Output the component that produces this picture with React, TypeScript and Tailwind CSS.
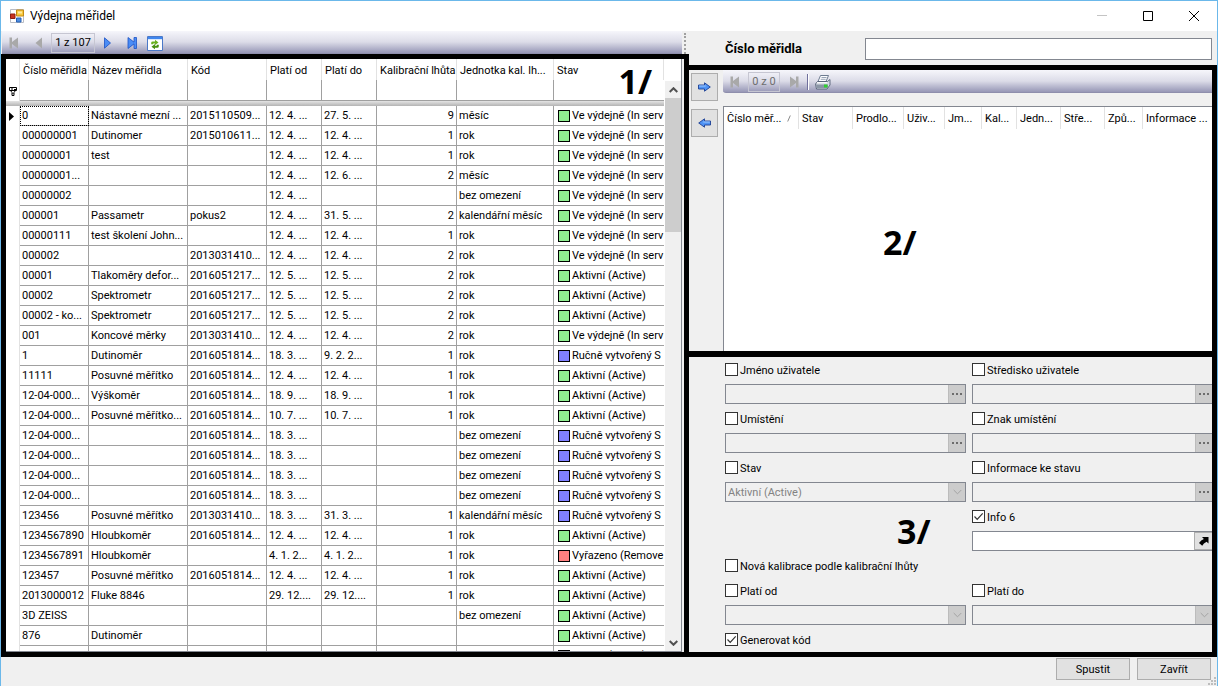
import type { ReactNode } from "react";

type State = "service" | "active" | "manual" | "removed";
type Row = [string, string, string, string, string, string, string, State];

const states: Record<State, { label: string; swatch: string }> = {
  service: { label: "Ve výdejně (In serv", swatch: "bg-[#90ee90]" },
  active: { label: "Aktivní (Active)", swatch: "bg-[#90ee90]" },
  manual: { label: "Ručně vytvořený S", swatch: "bg-[#8080ff]" },
  removed: { label: "Vyřazeno (Remove", swatch: "bg-[#ff8080]" },
};

const rows: Row[] = [
  ["0", "Nástavné mezní ...", "2015110509...", "12. 4. ...", "27. 5. ...", "9", "měsíc", "service"],
  ["000000001", "Dutinomer", "2015010611...", "12. 4. ...", "12. 4. ...", "1", "rok", "service"],
  ["00000001", "test", "", "12. 4. ...", "12. 4. ...", "1", "rok", "service"],
  ["00000001...", "", "", "12. 4. ...", "12. 6. ...", "2", "měsíc", "service"],
  ["00000002", "", "", "12. 4. ...", "", "", "bez omezení", "service"],
  ["000001", "Passametr", "pokus2", "12. 4. ...", "31. 5. ...", "2", "kalendářní měsíc", "service"],
  ["00000111", "test školení John...", "", "12. 4. ...", "12. 4. ...", "1", "rok", "service"],
  ["000002", "", "2013031410...", "12. 4. ...", "12. 4. ...", "2", "rok", "service"],
  ["00001", "Tlakoměry defor...", "2016051217...", "12. 5. ...", "12. 5. ...", "2", "rok", "active"],
  ["00002", "Spektrometr", "2016051217...", "12. 5. ...", "12. 5. ...", "2", "rok", "active"],
  ["00002 - ko...", "Spektrometr", "2016051217...", "12. 5. ...", "12. 5. ...", "2", "rok", "active"],
  ["001", "Koncové měrky", "2013031410...", "12. 4. ...", "12. 4. ...", "2", "rok", "service"],
  ["1", "Dutinoměr", "2016051814...", "18. 3. ...", "9. 2. 2...", "1", "rok", "manual"],
  ["11111", "Posuvné měřítko", "2016051814...", "12. 4. ...", "12. 4. ...", "1", "rok", "active"],
  ["12-04-000...", "Výškoměr", "2016051814...", "18. 9. ...", "18. 9. ...", "1", "rok", "active"],
  ["12-04-000...", "Posuvné měřítko...", "2016051814...", "10. 7. ...", "10. 7. ...", "1", "rok", "active"],
  ["12-04-000...", "", "2016051814...", "18. 3. ...", "", "", "bez omezení", "manual"],
  ["12-04-000...", "", "2016051814...", "18. 3. ...", "", "", "bez omezení", "manual"],
  ["12-04-000...", "", "2016051814...", "18. 3. ...", "", "", "bez omezení", "manual"],
  ["12-04-000...", "", "2016051814...", "18. 3. ...", "", "", "bez omezení", "manual"],
  ["123456", "Posuvné měřítko", "2013031410...", "18. 3. ...", "31. 3. ...", "1", "kalendářní měsíc", "manual"],
  ["1234567890", "Hloubkoměr", "2016051814...", "12. 4. ...", "12. 4. ...", "1", "rok", "active"],
  ["1234567891", "Hloubkoměr", "", "4. 1. 2...", "4. 1. 2...", "1", "rok", "removed"],
  ["123457", "Posuvné měřítko", "2016051814...", "12. 4. ...", "12. 4. ...", "1", "rok", "active"],
  ["2013000012", "Fluke 8846", "", "29. 12....", "29. 12....", "1", "rok", "active"],
  ["3D ZEISS", "", "", "", "", "", "bez omezení", "active"],
  ["876", "Dutinoměr", "", "", "", "", "", "active"],
  ["", "Posuvné měřítko", "", "", "", "", "", "active"],
];

const headers = ["Číslo měřidla", "Název měřidla", "Kód", "Platí od", "Platí do", "Kalibrační lhůta", "Jednotka kal. lh...", "Stav"];

const toolbar =
  "flex h-[23px] items-center border-b border-[#8e8eac] bg-linear-to-b from-[#f6f6fb] via-[#dcdce8] via-50% to-[#9797b6] pt-[2px]";

function FirstIcon({ off }: { off?: boolean }) {
  return (
    <svg width="10" height="12" viewBox="0 0 10 12" className={off ? "fill-[#a9a9a9]" : "fill-[#2f6fe0]"}>
      <path d="M0.5 0.5h2.5v4.6L9 0.5v11L3 6.9v4.6H0.5z" />
    </svg>
  );
}

function LastIcon({ off }: { off?: boolean }) {
  return (
    <svg
      width="10"
      height="12"
      viewBox="0 0 10 12"
      className={off ? "fill-[#a9a9a9]" : "fill-[#4a8cf5] stroke-[#1c52c4]"}
      strokeWidth="0.8"
    >
      <path d="M9.5 0.5H7v4.6L1 0.5v11l6-4.6v4.6h2.5z" />
    </svg>
  );
}

function FormIcon() {
  return (
    <svg width="14" height="14" viewBox="0 0 14 14">
      <path d="M0.5 0.5h13v13H0.5z" fill="#fff" stroke="#b9bcc4" />
      <path d="M6.5 1h7v6h-7z" fill="#f8c93c" stroke="#c48a12" />
      <path d="M8 2.5h4v2H8z" fill="#ffe9a0" />
      <path d="M0.5 5h4.500v4.500H0.5z" fill="#c8321f" stroke="#8f1c10" />
      <path d="M6.500 9h4.500v4H6.500z" fill="#4f8de0" stroke="#2660b4" />
    </svg>
  );
}

function RefreshIcon() {
  return (
    <svg width="16" height="15" viewBox="0 0 16 15">
      <path d="M0.5 0.5h15v14H0.5z" fill="#fff" stroke="#4a78c8" />
      <path d="M1 1h14v2.200H1z" fill="#3f86ee" />
      <path d="M4.200 8.300V6.800Q4.200 5.400 5.800 5.400H8V3.800l3.500 2.600L8 9V7.400H6.200v0.900z" fill="#6bb01e" />
      <path d="M11.800 8.700v1.500q0 1.500-1.600 1.500H8v1.600l-3.500-2.600L8 8.100v1.600h1.800V8.700z" fill="#4a9010" />
    </svg>
  );
}

function PrinterIcon() {
  return (
    <svg width="16" height="15" viewBox="0 0 16 15">
      <path d="M5.500 0.500h8l-2.500 6H3z" fill="#fdfdff" stroke="#6d7b90" />
      <path d="M6.500 2.500h5M5.700 4.300h5" stroke="#9aa6b8" />
      <path d="M2.500 6.500h10l2.500-2v5.500l-3 4H1.500L0.500 9z" fill="#d5dbe3" stroke="#47546a" strokeWidth="0.8" />
      <path d="M1 9.500h12v3.500H1.500z" fill="#8b96a6" />
      <path d="M9 9.500h3.500v3H9z" fill="#2fd02f" />
      <path d="M2 7.700h10" stroke="#fff" />
    </svg>
  );
}

function MoveArrow({ left }: { left?: boolean }) {
  return (
    <svg width="13" height="10" viewBox="0 0 13 10" className={left ? "-scale-x-100" : ""}>
      <path d="M0.500 3h6V0.800L12.300 5 6.500 9.200V7h-6z" fill="#4f93f5" stroke="#1d3f94" strokeWidth="0.9" />
      <path d="M1.200 4h6.500" stroke="#a9d2ff" strokeWidth="0.9" />
    </svg>
  );
}

function Chevron({ up, className }: { up?: boolean; className: string }) {
  return (
    <svg width="9" height="6" viewBox="0 0 9 6" fill="none" className={className}>
      <path d={up ? "M0.700 5L4.500 1.200 8.300 5" : "M0.700 1L4.500 4.800 8.300 1"} />
    </svg>
  );
}

function MeasuresTable() {
  return (
    <table className="w-full table-fixed border-separate border-spacing-0 text-left whitespace-nowrap">
      <colgroup>
        <col className="w-[14px]" />
        <col className="w-[69px]" />
        <col className="w-[99px]" />
        <col className="w-[79px]" />
        <col className="w-[55px]" />
        <col className="w-[55px]" />
        <col className="w-[80px]" />
        <col className="w-[97px]" />
        <col />
      </colgroup>
      <thead>
        <tr className="h-[21px]">
          <th className="border-r border-[#e2e2e2] p-0" />
          {headers.map((h) => (
            <th key={h} className="overflow-hidden border-r border-[#e2e2e2] p-0 pt-[2px] pl-[3px] font-normal">
              {h}
            </th>
          ))}
        </tr>
        <tr className="h-[21px]">
          <td className="border-r border-[#e2e2e2] p-0">
            <svg width="8" height="9" viewBox="0 0 8 9" className="mx-auto mt-[2px]" fill="none" stroke="#000">
              <path d="M0.500 0.500h7v3h-7zM1.500 3.500l1.500 2V8.500h2V5.500l1.500-2M3 0.500v3M5 2.500h2.500M3.500 6.500h1" />
            </svg>
          </td>
          {headers.map((h) => (
            <td key={h} className="border-r border-b border-[#a0a0a0] p-0 last:border-r-0" />
          ))}
        </tr>
        <tr className="h-[5px]">
          <td colSpan={9} className="bg-linear-to-b from-[#e4e4e4] to-[#b4b4b4] p-0" />
        </tr>
      </thead>
      <tbody>
        {rows.map((row, i) => (
          <tr key={i} className="h-5">
            <td className="border-r border-[#e2e2e2] p-0">
              {i === 0 && (
                <svg width="5" height="9" viewBox="0 0 5 9" className="ml-[3px]">
                  <path d="M0 0l5 4.500L0 9z" />
                </svg>
              )}
            </td>
            {row.slice(0, 7).map((cell, c) => (
              <td
                key={c}
                className={
                  c === 5
                    ? "overflow-hidden border-r border-b border-[#a0a0a0] p-0 pr-[2px] text-right leading-[19px]"
                    : i === 0 && c === 0
                      ? "overflow-hidden border-r border-b border-[#a0a0a0] p-0 pl-[2px] leading-[19px] outline-1 -outline-offset-1 outline-dotted outline-black"
                      : "overflow-hidden border-r border-b border-[#a0a0a0] p-0 pl-[2px] leading-[19px]"
                }
              >
                {cell}
              </td>
            ))}
            <td className="overflow-hidden border-b border-[#a0a0a0] p-0 pl-1">
              <span className="flex h-[19px] items-center gap-[2px]">
                <span className={`size-3 shrink-0 border border-black ${states[row[7]].swatch}`} />
                <span className="pt-px">{states[row[7]].label}</span>
              </span>
            </td>
          </tr>
        ))}
      </tbody>
    </table>
  );
}

function Check({ id, label, checked }: { id: string; label: string; checked?: boolean }) {
  return (
    <div className="flex h-[13px] items-center gap-[2px]">
      <span className="grid size-[13px]">
        <input
          id={id}
          type="checkbox"
          defaultChecked={checked}
          className="peer col-start-1 row-start-1 size-[13px] appearance-none border border-[#333] bg-white"
        />
        <svg
          viewBox="0 0 13 13"
          className="pointer-events-none invisible col-start-1 row-start-1 size-[13px] fill-none stroke-[#333] peer-checked:visible"
        >
          <path d="M2.500 6.500l2.700 2.800 5.500-6" strokeWidth="1.200" />
        </svg>
      </span>
      <label htmlFor={id} className="pt-[2px] leading-[13px] whitespace-nowrap">
        {label}
      </label>
    </div>
  );
}

function Field({ children, open }: { children: ReactNode; open?: boolean }) {
  return (
    <div className={open ? "mt-2 flex h-5 border border-r-0 border-[#838790]" : "mt-2 flex h-5 border border-[#838790]"}>
      {children}
    </div>
  );
}

function Lookup({ id, label, open }: { id: string; label: string; open?: boolean }) {
  return (
    <div>
      <Check id={id} label={label} />
      <Field open={open}>
        <input aria-label={label} disabled className="min-w-0 flex-1" />
        <button
          disabled
          aria-label={`${label} - vybrat`}
          className="flex w-[17px] items-center justify-center gap-[2px] border-l border-[#bcbcbc] bg-[#ccc]"
        >
          <i className="size-[2px] bg-[#6d6d6d]" />
          <i className="size-[2px] bg-[#6d6d6d]" />
          <i className="size-[2px] bg-[#6d6d6d]" />
        </button>
      </Field>
    </div>
  );
}

function Combo({ id, label, value, open }: { id: string; label: string; value?: string; open?: boolean }) {
  return (
    <div>
      <Check id={id} label={label} />
      <Field open={open}>
        <div className="grid flex-1 grid-cols-[1fr_17px]">
          <select
            aria-label={label}
            disabled
            className="col-span-2 col-start-1 row-start-1 appearance-none pt-px pl-[2px] text-[#838383] opacity-100"
          >
            <option>{value ?? ""}</option>
          </select>
          <span className="pointer-events-none col-start-2 row-start-1 flex items-center justify-center border-l border-[#bcbcbc] bg-[#ccc]">
            <Chevron className="stroke-[#a3a3a3]" />
          </span>
        </div>
      </Field>
    </div>
  );
}

const basket: [string, string][] = [
  ["Číslo měř...", "w-[75px]"],
  ["Stav", "w-[54px]"],
  ["Prodlo...", "w-[51px]"],
  ["Uživ...", "w-[41px]"],
  ["Jm...", "w-[37px]"],
  ["Kal...", "w-[35px]"],
  ["Jedn...", "w-[44px]"],
  ["Stře...", "w-[44px]"],
  ["Způ...", "w-[38px]"],
  ["Informace ...", ""],
];

function BasketTable() {
  return (
    <table className="w-full table-fixed border-separate border-spacing-0 text-left whitespace-nowrap">
      <thead>
        <tr className="h-[22px]">
          {basket.map(([h, w], i) => (
            <th key={h} className={`border-r border-[#e2e2e2] p-0 pt-px pl-[3px] font-normal last:border-r-0 ${w}`}>
              <span className="flex items-center gap-[6px] overflow-hidden">
                {h}
                {i === 0 && (
                  <svg width="4" height="7" viewBox="0 0 4 7" className="shrink-0 fill-none stroke-[#8a8a8a]">
                    <path d="M0.700 6.500L3.300 0.500" />
                  </svg>
                )}
              </span>
            </th>
          ))}
        </tr>
      </thead>
    </table>
  );
}

const mark = "pointer-events-none absolute font-['Noto_Sans',sans-serif] text-[34px] leading-8 font-bold";
const action = "h-[22px] w-[74px] border border-[#adadad] bg-[#e1e1e1] pt-px";

export default function App() {
  return (
    <div className="flex h-screen flex-col overflow-hidden border border-b-0 border-[#6bb8ea] bg-[#f0f0f0] font-[Roboto,sans-serif] text-[11px] leading-[14px] text-black">
      <header className="flex h-[30px] shrink-0 items-center bg-white pl-[9px] text-[12px]">
        <FormIcon />
        <h1 className="ml-[6px] flex-1">Výdejna měřidel</h1>
        <button aria-label="Minimalizovat" className="grid h-full w-[46px] place-items-center">
          <svg width="10" height="10" viewBox="0 0 10 10" stroke="#c4c4c4">
            <path d="M0 4.500h10" />
          </svg>
        </button>
        <button aria-label="Maximalizovat" className="grid h-full w-[46px] place-items-center">
          <svg width="10" height="10" viewBox="0 0 10 10" fill="none" stroke="#000">
            <path d="M0.500 0.500h9v9h-9z" />
          </svg>
        </button>
        <button aria-label="Zavřít okno" className="grid h-full w-[46px] place-items-center">
          <svg width="10" height="10" viewBox="0 0 10 10" stroke="#000">
            <path d="M0 0l10 10M10 0L0 10" />
          </svg>
        </button>
      </header>

      <main className="grid min-h-0 flex-1 grid-cols-[688fr_528fr] grid-rows-[minmax(0,1fr)]">
        <section className="flex min-w-0 flex-col">
          <div className="flex shrink-0 justify-between">
            <nav className={`${toolbar} ml-px flex-1 pl-[7px]`}>
              <button disabled aria-label="První">
                <FirstIcon off />
              </button>
              <button disabled aria-label="Předchozí" className="ml-4">
                <svg width="7" height="12" viewBox="0 0 7 12" className="fill-[#a9a9a9]">
                  <path d="M7 0.500v11L0.500 6z" />
                </svg>
              </button>
              <span className="ml-[9px] flex h-5 w-11 items-center justify-center border border-[#c6c6d2]">
                1 z 107
              </span>
              <button aria-label="Další" className="ml-[9px]">
                <svg width="7" height="12" viewBox="0 0 7 12" className="fill-[#4a8cf5] stroke-[#1c52c4]" strokeWidth="0.8">
                  <path d="M0.500 0.800v10.400L6.500 6z" />
                </svg>
              </button>
              <button aria-label="Poslední" className="ml-4">
                <LastIcon />
              </button>
              <button aria-label="Obnovit" className="ml-[10px]">
                <RefreshIcon />
              </button>
            </nav>
            <span className="mt-[2px] mr-[3px] ml-[2px] w-0 border-l-2 border-dotted border-[#a0a0a0]" />
          </div>

          <div className="relative flex min-h-0 flex-1 overflow-hidden border-[5px] border-black bg-white">
            <div className="flex min-w-0 flex-1 border-r border-b border-[#838790]">
              <div className="min-w-0 flex-1 overflow-hidden">
                <MeasuresTable />
              </div>
              <div className="mt-[22px] ml-px flex w-[16px] shrink-0 flex-col items-center bg-[#f0f0f0]">
                <span className="flex h-[17px] items-center">
                  <Chevron up className="stroke-[#505050] stroke-2" />
                </span>
                <span className="h-[134px] w-full bg-[#cdcdcd]" />
                <span className="mt-auto flex h-[17px] items-center">
                  <Chevron className="stroke-[#505050] stroke-2" />
                </span>
              </div>
            </div>
            <span className="w-[2px] bg-[#f0f0f0]" />
            <strong className={`${mark} top-[6px] right-[32px]`}>1/</strong>
          </div>
        </section>

        <section className="flex min-h-0 min-w-0 flex-col">
          <div className="flex h-[34px] shrink-0 items-center pt-[2px] pr-[5px] pl-9">
            <label htmlFor="cislo" className="w-[140px] text-[13px] font-bold">
              Číslo měřidla
            </label>
            <input id="cislo" className="h-[22px] min-w-0 flex-1 border border-[#838790] bg-white px-1" />
          </div>

          <div className="relative flex min-h-0 flex-1 gap-[5px] border-t-[5px] border-r-[5px] border-b-[6px] border-black pl-[2px]">
            <div className="flex flex-col gap-2 pt-[3px]">
              <button aria-label="Přidat" className="grid h-7 w-[27px] place-items-center border border-[#adadad] bg-[#e1e1e1]">
                <MoveArrow />
              </button>
              <button aria-label="Odebrat" className="grid h-7 w-[27px] place-items-center border border-[#adadad] bg-[#e1e1e1]">
                <MoveArrow left />
              </button>
            </div>
            <div className="flex min-w-0 flex-1 flex-col">
              <nav className={`${toolbar} shrink-0 rounded-bl-[3px] pl-[7px]`}>
                <button disabled aria-label="První položka">
                  <FirstIcon off />
                </button>
                <span className="ml-2 flex h-5 w-8 items-center justify-center border border-[#c6c6d2] text-[#6d6d6d]">
                  0 z 0
                </span>
                <button disabled aria-label="Poslední položka" className="ml-[9px]">
                  <LastIcon off />
                </button>
                <span className="ml-2 h-4 border-l border-[#6f6f9c] shadow-[1px_0_0_#fff]" />
                <button aria-label="Tisk" className="ml-[7px]">
                  <PrinterIcon />
                </button>
              </nav>
              <div className="mt-[13px] min-h-0 flex-1 overflow-hidden border-t border-l border-[#838790] bg-white">
                <BasketTable />
              </div>
            </div>
            <strong className={`${mark} top-[156px] left-[194px]`}>2/</strong>
          </div>

          <form
            className="relative shrink-0 border-r-[5px] border-b-[5px] border-black pt-[6px] pb-[6px] pl-9"
            onSubmit={(e) => e.preventDefault()}
          >
            <div className="grid grid-cols-[241fr_240fr] gap-x-[6px] gap-y-2">
              <Lookup id="jmeno" label="Jméno uživatele" />
              <Lookup id="stredisko" label="Středisko uživatele" open />
              <Lookup id="umisteni" label="Umístění" />
              <Lookup id="znak" label="Znak umístění" open />
              <Combo id="stav" label="Stav" value="Aktivní (Active)" />
              <Lookup id="informace" label="Informace ke stavu" open />
              <div className="col-start-2">
                <Check id="info6" label="Info 6" checked />
                <Field open>
                  <input aria-label="Info 6" className="min-w-0 flex-1 bg-white px-1" />
                  <button
                    aria-label="Info 6 - otevřít"
                    className="grid w-[18px] place-items-center border border-r-0 border-[#adadad] bg-[#e1e1e1]"
                  >
                    <svg width="12" height="12" viewBox="0 0 12 12">
                      <path d="M4 2h6.500v6.500L8.600 6.700Q5.500 8.300 4.200 10.800L1 7.900Q3 5 5.900 4z" />
                    </svg>
                  </button>
                </Field>
              </div>
              <div className="col-span-2 h-[17px]">
                <Check id="nova" label="Nová kalibrace podle kalibrační lhůty" />
              </div>
              <Combo id="od" label="Platí od" />
              <Combo id="do" label="Platí do" open />
              <Check id="generovat" label="Generovat kód" checked />
            </div>
            <strong className={`${mark} top-[158px] left-[208px]`}>3/</strong>
          </form>
        </section>
      </main>

      <footer className="flex h-[29px] shrink-0 items-start justify-end gap-[7px] pt-px">
        <button className={action}>Spustit</button>
        <button className={action}>Zavřít</button>
        <svg width="9" height="9" viewBox="0 0 9 9" className="-ml-[10px] self-end fill-[#bdbdbd]">
          <path d="M6 0h2v2H6zM6 3h2v2H6zM3 3h2v2H3zM6 6h2v2H6zM3 6h2v2H3zM0 6h2v2H0z" />
        </svg>
      </footer>
    </div>
  );
}
